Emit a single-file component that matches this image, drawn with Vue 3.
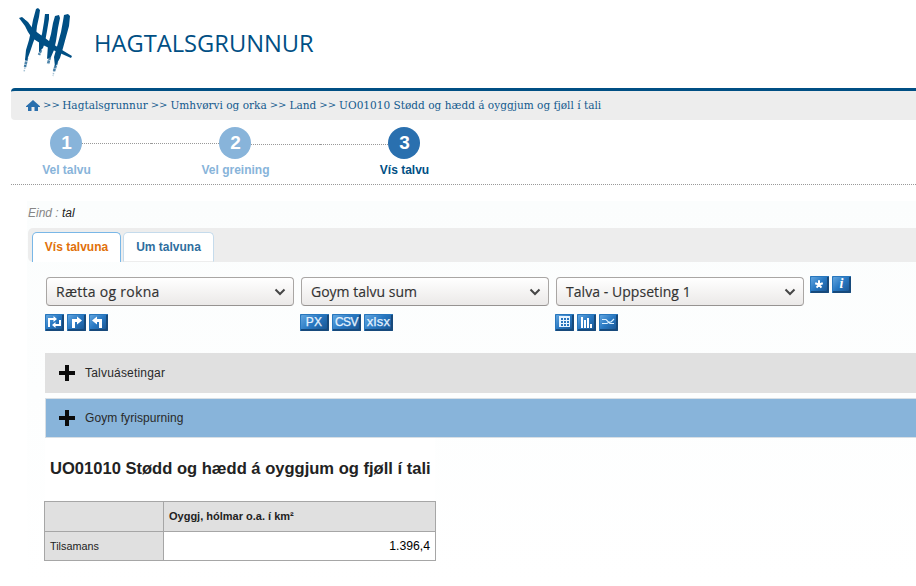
<script setup>
const crumbs = ['Hagtalsgrunnur', 'Umhvørvi og orka', 'Land', 'UO01010 Stødd og hædd á oyggjum og fjøll í tali']
const steps = [
  { n: 1, label: 'Vel talvu' },
  { n: 2, label: 'Vel greining' },
  { n: 3, label: 'Vís talvu', current: true },
]
const groups = [
  { label: 'Rætta og rokna', cls: 'first', icons: ['swap', 'right', 'left'] },
  { label: 'Goym talvu sum', cls: 'second', texts: ['PX', 'CSV', 'xlsx'] },
  { label: 'Talva - Uppseting 1', cls: 'third', icons: ['table', 'bars', 'lines'] },
]
const panels = [
  { label: 'Talvuásetingar', cls: 'grey' },
  { label: 'Goym fyrispurning', cls: 'blue' },
]
</script>

<template>
  <div class="page">
    <header class="header">
      <svg class="logo" width="56" height="72" viewBox="0 0 56 72">
        <defs>
          <filter id="chalk" x="-10%" y="-10%" width="120%" height="120%">
            <feTurbulence type="fractalNoise" baseFrequency=".45" numOctaves="2" seed="4" result="n" />
            <feDisplacementMap in="SourceGraphic" in2="n" scale="1.6" />
          </filter>
        </defs>
        <g fill="#004f84" filter="url(#chalk)">
          <path d="M18 3L20 2 22 4 21 11 19 20 18 29 15 37 12 46 9 54 7 54 8 44 11 34 13 25 15 14Z" />
          <path d="M27 8L31 8 31 13 29 25 27 36 25 42 21 46 21 36 24 28 26 16Z" />
          <path d="M37 10L41 9 42 12 40 22 38 35 36 44 33 51 29 53 30 39 33 28 35 17Z" />
          <path d="M46 9L50 8 52 10 51 20 48 31 45 42 42 52 37 61 36 51 40 37 43 26 45 15Z" />
          <path d="M1 12L4 11 10 16 15 23 20 27 27 32 35 38 44 44 54 50 53 52 44 48 35 44 25 39 14 32 10 26 7 20Z" />
          <g fill="none" stroke="#004f84">
            <path d="M9 52L7 61M23 44L21 49M32 51L30 58M39 56L36 65" stroke-width="2.600" stroke-dasharray="3 .6" opacity=".7" />
            <path d="M7.500 59L6 66M36.500 62L35 70" stroke-width="1.500" stroke-dasharray="1.500 1" opacity=".35" />
          </g>
        </g>
      </svg>
      <h1>HAGTALSGRUNNUR</h1>
    </header>

    <nav class="crumbs">
      <svg width="14" height="11" viewBox="0 0 14 11"><path fill="#2a6fad" d="M7 0L14 6.3V7H12V11H8.5V7H5.5V11H2V7H0V6.3Z" /></svg>
      <template v-for="c in crumbs" :key="c"><span class="sep">&gt;&gt;</span><a>{{ c }}</a></template>
    </nav>

    <div class="steps">
      <div v-for="s in steps" :key="s.n" class="step" :class="{ current: s.current }">
        <div class="track"><i></i><b>{{ s.n }}</b><i></i></div>
        <span>{{ s.label }}</span>
      </div>
    </div>

    <main class="content">
      <p class="unit">Eind : <em>tal</em></p>
      <div class="tabs">
        <div class="tab active">Vís talvuna</div>
        <div class="tab">Um talvuna</div>
      </div>

      <div class="tools">
        <div v-for="g in groups" :key="g.label" class="group">
          <div class="select">
            <span :class="g.cls">{{ g.label }}</span>
            <svg width="12" height="8" viewBox="0 0 12 8"><path d="M1.5 1.5L6 6L10.5 1.5" fill="none" stroke="#464646" stroke-width="2" /></svg>
          </div>
          <div class="buttons">
            <span v-for="i in g.icons" :key="i" class="btn">
              <svg width="19" height="17" viewBox="0 0 19 17" fill="none" stroke="#fff">
                <template v-if="i === 'swap'">
                  <path d="M4 13V5H9M15 6V11H10" stroke-width="2" />
                  <path d="M8.500 2L12 5L8.500 8ZM10.500 8L7 11L10.500 14Z" fill="#fff" stroke="none" />
                </template>
                <template v-else-if="i === 'right'">
                  <path d="M6.500 14V6.500H11" stroke-width="3" />
                  <path d="M10 2.500L15 6.500L10 10.500Z" fill="#fff" stroke="none" />
                </template>
                <template v-else-if="i === 'left'">
                  <path d="M11.500 14V6.500H7" stroke-width="3" />
                  <path d="M8 2.500L3 6.500L8 10.500Z" fill="#fff" stroke="none" />
                </template>
                <template v-else-if="i === 'table'">
                  <path d="M4 2H15V13H4Z" fill="#e7f4ff" stroke="none" />
                  <path d="M6 4h2v2h-2zM9 4h2v2h-2zM12 4h2v2h-2zM6 7h2v2h-2zM9 7h2v2h-2zM12 7h2v2h-2zM6 10h2v2h-2zM9 10h2v2h-2zM12 10h2v2h-2z" fill="#2875bd" stroke="none" />
                </template>
                <path v-else-if="i === 'bars'" d="M5 3V14M8 6V14M11 4V14M14 10V14" stroke-width="2" />
                <path v-else d="M3 5.500H7L11 9.500H15M3 9.500H8L10 8H12L15 5" stroke="#d9efff" stroke-width="1.200" />
              </svg>
            </span>
            <span v-for="t in g.texts" :key="t" class="btn wide" :class="t">{{ t }}</span>
          </div>
        </div>
        <div class="extras">
          <span class="btn">
            <svg width="19" height="17" viewBox="0 0 19 17"><path d="M9 8.500V4.300M9 8.500L5.200 7.200M9 8.500L12.800 7.200M9 8.500L6.600 11.700M9 8.500L11.400 11.700" stroke="#fff" stroke-width="2" /></svg>
          </span>
          <span class="btn info">i</span>
        </div>
      </div>

      <div v-for="p in panels" :key="p.label" class="panel" :class="p.cls">
        <svg width="16" height="16" viewBox="0 0 16 16"><path d="M8 0V16M0 8H16" stroke="#0b0b0b" stroke-width="4" /></svg>
        <span>{{ p.label }}</span>
      </div>

      <div class="result">
        <h2>UO01010 Stødd og hædd á oyggjum og fjøll í tali</h2>
        <table>
          <tbody>
            <tr><th></th><th class="col">Oyggj, hólmar o.a. í km²</th></tr>
            <tr><th class="row">Tilsamans</th><td>1.396,4</td></tr>
          </tbody>
        </table>
      </div>
    </main>
  </div>
</template>

<style>
body { background: #fff; overflow: hidden; }
</style>

<style scoped>
* { box-sizing: border-box; }
.page { height: 586px; overflow: hidden; font: 12px/14px "Liberation Sans", Arial, sans-serif; color: #222; }
.header { height: 88px; display: flex; align-items: flex-start; padding: 6px 0 0 18px; }
.logo { flex: none; }
h1 { margin: 21px 0 0 20px; font: 400 23.7px/32px "Open Sans", sans-serif; color: #004f84; white-space: nowrap; }
.crumbs { height: 32px; margin-left: 11px; border-top: 3px solid #004f84; border-radius: 4px 0 0 4px; background: #ededed; display: flex; align-items: center; padding: 0 0 0 15px; font: 10.56px/14px "DejaVu Serif", serif; color: #135a8d; white-space: nowrap; }
.crumbs svg { margin: 0 1px 1px 0; }
.crumbs a { margin-top: -1px; }
.sep { margin: -1px 3px 0 3px; font-size: 10px; }
.crumbs svg + .sep { margin: -1px 2.400px 0 2px; }
.steps { height: 65px; margin-left: 11px; border-bottom: 1px dotted #999; display: flex; padding-top: 7px; }
.step { width: 169px; display: flex; flex-direction: column; align-items: center; font-weight: bold; color: #88b4da; }
.step:first-child { margin-left: -29px; }
.track { width: 100%; display: flex; align-items: flex-start; }
.track i { flex: none; width: 68px; margin-top: 16px; border-top: 1px dotted #999; }
.track i:last-child { width: 69px; }
.step:nth-child(2) i:last-child, .step:nth-child(3) i:first-child { margin-top: 17px; }
.step:first-child i:first-child, .step:last-child i:last-child { visibility: hidden; }
.track b { flex: none; width: 32px; height: 32px; border-radius: 50%; background: #88b4da; color: #fff; font-size: 19px; line-height: 31px; text-align: center; padding-left: 1px; }
.step span { margin-top: 4px; }
.current { color: #004f84; }
.current b { background: #2a70af; }
.content { margin: 16px 0 0 27px; height: 385px; background: linear-gradient(#fbfdfd, #fff); }
.unit { margin: 0; height: 27px; padding: 5px 0 0 1px; color: #868686; font-style: italic; }
.unit em { color: #222; }
.tabs { height: 34px; margin-left: 1px; padding: 4px 0 0 4px; border-radius: 5px 0 0 5px; background: #ededed; display: flex; gap: 2px; }
.tab { width: 91px; height: 30px; border: 1px solid #c5dbec; border-bottom-color: #ededed; border-radius: 5px 5px 0 0; background: #fff; color: #2e6e9e; font-weight: bold; line-height: 29px; text-align: center; }
.tab.active { width: 89px; border-color: #79b7e7; border-bottom: 0; color: #e17009; }
.tools { height: 91px; display: flex; padding: 14px 0 0 19px; }
.group { width: 255px; }
.select { width: 248px; height: 29px; margin-top: 1px; border: 1px solid #a9a6a4; border-bottom-color: #969391; border-radius: 4px; background: linear-gradient(#fff, #ebe9e8); display: flex; align-items: center; justify-content: space-between; padding: 0 7px 0 9px; font: 14px/20px "Open Sans", sans-serif; color: #333; -webkit-text-stroke: .15px #333; white-space: nowrap; }
.first { letter-spacing: .28px; }
.third { letter-spacing: .05px; }
.buttons { display: flex; gap: 3px; margin: 8px 0 0; }
.btn { display: block; flex: none; width: 19px; height: 17px; border-radius: 1px; background: linear-gradient(135deg, #69abe3, #2878c2 48%, #17508b); box-shadow: inset 1px 1px #2877bd, inset -2px -2px #174a7c; color: #fff; text-align: center; }
.btn svg { display: block; }
.group .buttons { margin-left: -1px; }
.wide { width: 29px; font: 12px/16px "Liberation Sans", sans-serif; color: #e4f2ff; -webkit-text-stroke: .25px #e4f2ff; }
.CSV { font-size: 12px; letter-spacing: -.5px; }
.PX { padding-right: 1px; letter-spacing: .3px; }
.xlsx { font-size: 13px; line-height: 15px; letter-spacing: .3px; }
.extras { display: flex; gap: 3px; margin-left: -1px; }
.info { font: italic bold 14px/16px "Liberation Serif", serif; }
.panel { height: 40px; margin-left: 18px; padding-left: 14px; display: flex; align-items: center; gap: 10px; font-size: 12px; color: #292929; }
.grey { background: #e0e0e0; letter-spacing: .2px; }
.blue { margin-top: 5px; padding-left: 13px; background: #88b4da; border: 1px solid #d8dfe5; border-right: 0; letter-spacing: .07px; }
.result { width: 392px; margin-left: 17px; }
h2 { margin: 0 1px; height: 63px; padding: 21px 0 0 5px; background: #fff; font-size: 16.56px; line-height: 20px; white-space: nowrap; }
table { border-collapse: collapse; width: 392px; height: 60px; table-layout: fixed; }
th, td { border: 1px solid #a6a6a6; background: #e0e0e0; padding: 0 5px; font-size: 11px; text-align: left; height: 29px; }
th:first-child { width: 119px; }
th.row { font-weight: normal; font-size: 10.8px; }
td { background: #fff; color: #000; font-size: 12.2px; text-align: right; }
</style>
